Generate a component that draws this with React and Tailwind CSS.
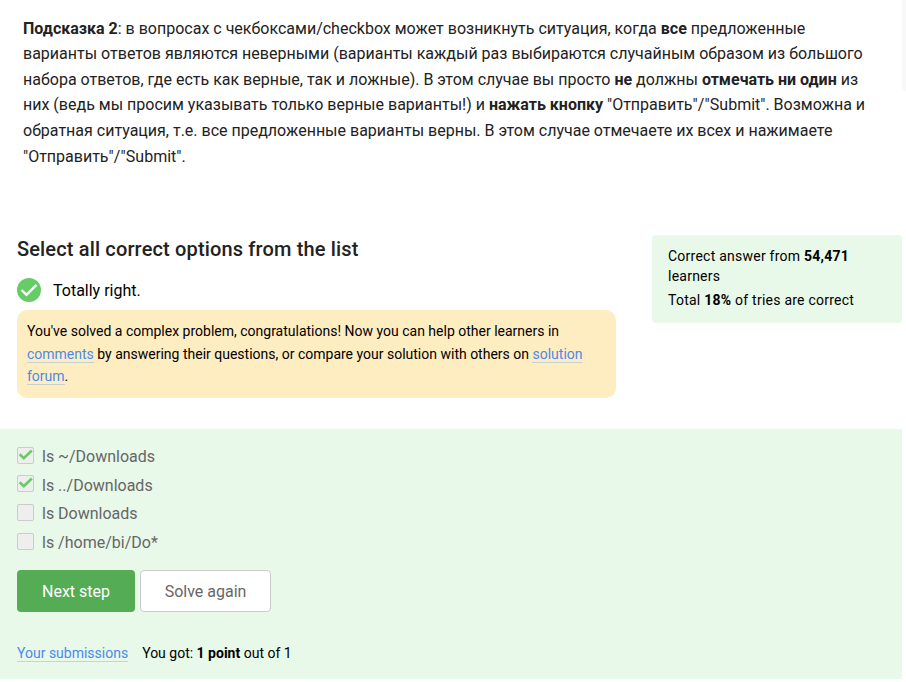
const Check = () => (
  <svg viewBox="0 0 17 17" className="absolute -top-px -left-px size-[17px]" fill="none">
    <path d="M2.7 7.3 L6.8 11.2 L14.8 3.5" stroke="#66cc66" strokeWidth="2.6" />
  </svg>
);

const options = [
  ["ls ~/Downloads", true],
  ["ls ../Downloads", true],
  ["ls Downloads", false],
  ["ls /home/bi/Do*", false],
];

const linkClass = "bg-[linear-gradient(#4494ed50,#4494ed50)] bg-[length:100%_1px] bg-bottom bg-no-repeat pb-px text-[#4a8aed]";

const Submit = () => (
  <>
    "Отправить<span className="tracking-[0.15px]">"/"</span>Submit"
  </>
);

export default function App() {
  return (
    <div className="h-[682px] w-[906px] overflow-hidden bg-white font-['Roboto',sans-serif] text-black">
      <div className="flex h-[235px] justify-between">
        <p className="w-[860px] pt-[15.6px] pl-[23px] text-base leading-[25.6px] whitespace-nowrap text-[#222]">
          <b>Подсказка 2</b>: в вопросах с чекбоксами/checkbox может возникнуть ситуация, когда <b>все</b> предложенные<br />
          варианты ответов являются неверными (варианты каждый раз выбираются случайным образом из большого<br />
          набора ответов, где есть как верные, так и ложные). В этом случае вы просто <b>не</b> должны <b>отмечать ни один</b> из<br />
          них (ведь мы просим указывать только верные варианты!) и <b>нажать кнопку</b> <Submit />. Возможна и<br />
          обратная ситуация, т.е. все предложенные варианты верны. В этом случае отмечаете их всех и нажимаете<br />
          <Submit />.
        </p>
        <div className="h-[91px] w-[4px] bg-[#f8f8f8]" />
      </div>
      <div className="flex h-[194px] justify-between pr-1 pl-[17px]">
        <div className="w-[599px]">
          <h2 className="text-xl leading-7 font-medium tracking-[0.15px] text-[#222]">Select all correct options from the list</h2>
          <div className="mt-[15px] flex h-6 items-center gap-3 text-base">
            <svg viewBox="0 0 24 24" className="size-6" fill="none">
              <circle cx="12" cy="12" r="12" fill="#66cc66" />
              <path d="M4.5 12 L9.5 16.8 L19.5 6.8" stroke="white" strokeWidth="2.4" />
            </svg>
            <span className="pt-0.5">Totally right.</span>
          </div>
          <div className="mt-2 h-[88px] rounded-[10px] bg-[#ffedc2] px-2.5 pt-[10.3px] text-sm leading-[22.4px]">
            You've solved a complex problem, congratulations! Now you can help other learners in<br />
            <a className={linkClass}>comments</a> by answering their questions, or compare your solution with others on <a className={linkClass}>solution</a><br />
            <a className={linkClass}>forum</a>.
          </div>
        </div>
        <div className="h-[88px] w-[250px] rounded bg-[#e8f8e9] px-4 pt-[11px] text-sm leading-5 tracking-[0.24px]">
          <p>Correct answer from <b>54,471</b><br />learners</p>
          <p className="mt-1">Total <b>18%</b> of tries are correct</p>
        </div>
      </div>
      <div className="h-[250px] w-[902px] bg-[#e8f8e9] pt-[13.6px] pl-[17px]">
        <div className="text-base text-[#666]">
          {options.map(([label, on]) => (
            <div key={label} className="flex h-[28.7px] items-center gap-2">
              <span className="relative mb-[3.6px] size-[17px] rounded-[2px] border border-[#ccc] bg-[#eee]">{on && <Check />}</span>
              <span>{label}</span>
            </div>
          ))}
        </div>
        <div className="mt-[12.6px] flex gap-[5px] text-base">
          <button className="h-[42px] w-[118px] rounded bg-[#54ad54] pt-0.5 text-white">Next step</button>
          <button className="h-[42px] w-[131px] rounded border border-[#ccc] bg-white pt-0.5 text-[#666]">Solve again</button>
        </div>
        <div className="mt-[31px] text-sm leading-5">
          <a className={linkClass}>Your submissions</a>
          <span className="ml-3.5">You got: <b>1 point</b> out of 1</span>
        </div>
      </div>
    </div>
  );
}
